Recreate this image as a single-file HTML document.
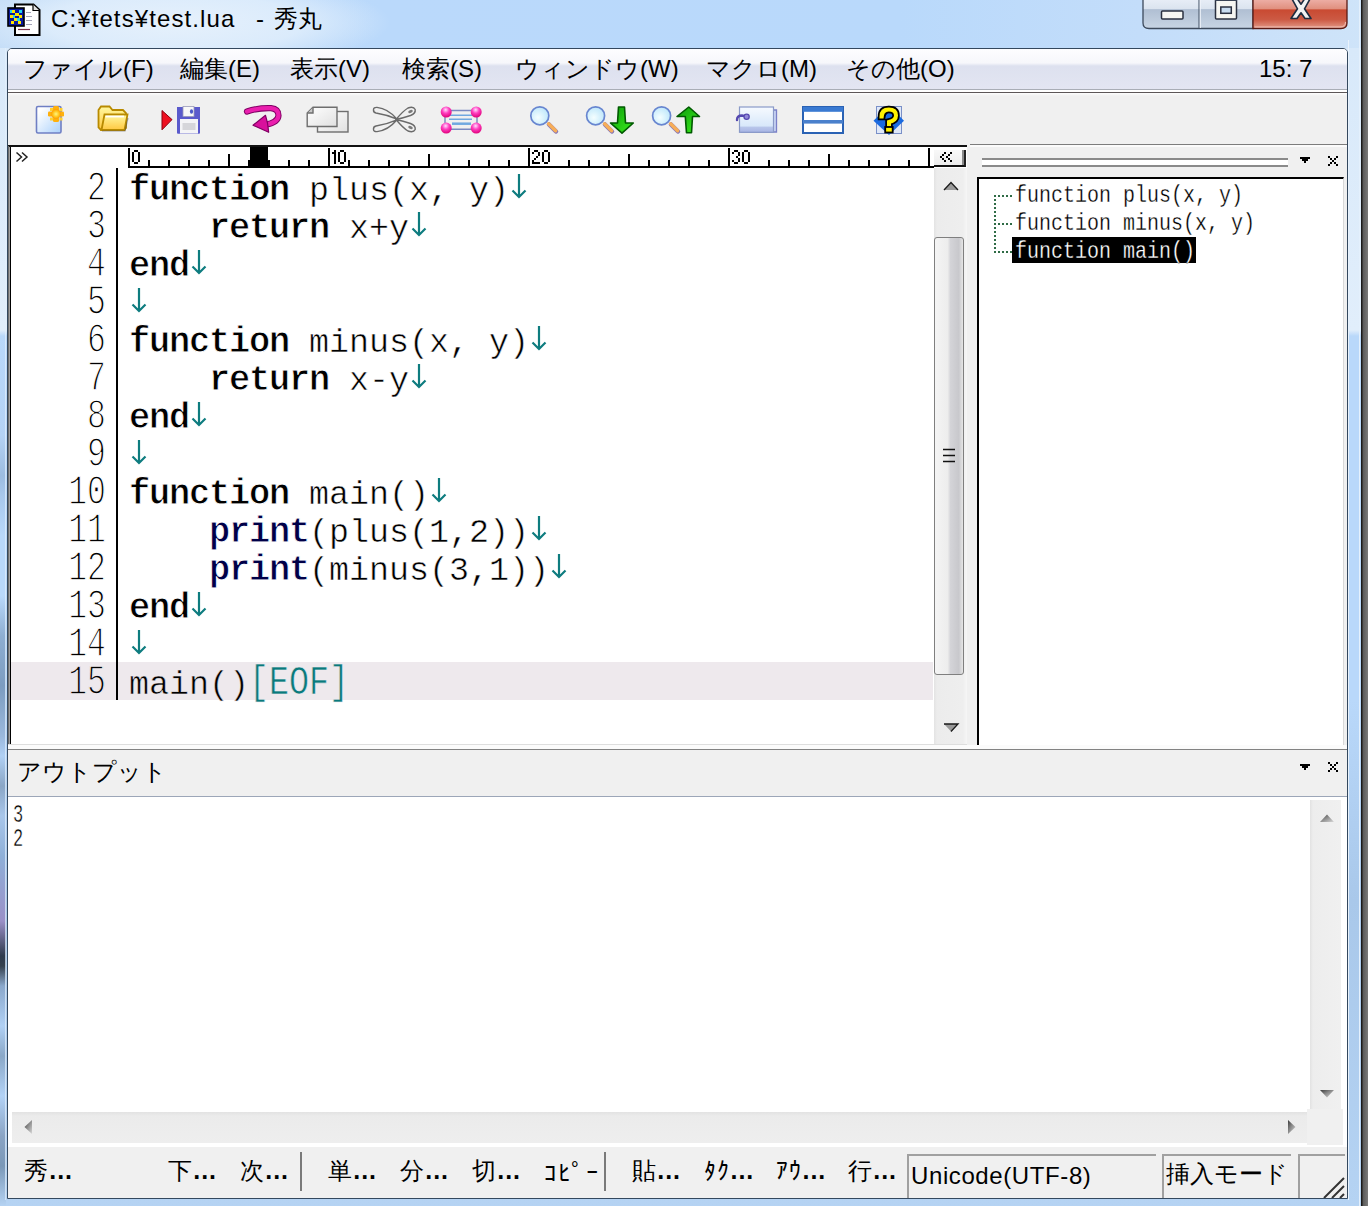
<!DOCTYPE html>
<html><head><meta charset="utf-8">
<style>
*{margin:0;padding:0;box-sizing:border-box}
html,body{width:1368px;height:1206px;overflow:hidden}
body{position:relative;font-family:"Liberation Sans",sans-serif;background:#bcd9f7}
.a{position:absolute}
.ui{font-family:"Liberation Sans",sans-serif;font-size:24px;color:#000;white-space:pre;line-height:1}
.ol{font-size:24px;line-height:28px;transform:scaleX(0.8333);-webkit-text-stroke:0.3px #fff;transform-origin:0 0}
.outp{font-size:25px;line-height:24px;color:#000;transform:scaleX(0.68);transform-origin:0 0;-webkit-text-stroke:0.4px #fff}
.sb{font-size:24px;letter-spacing:1.3px}
.code{font-size:34px;line-height:46px;height:38px;transform:scaleX(0.9804);transform-origin:0 0}
.ln{font-size:36px;line-height:46px;width:120px;text-align:right;transform:scale(0.875,1.17);transform-origin:100% 31px;-webkit-text-stroke:1.2px #fff;color:#000}
.rg{-webkit-text-stroke:0.5px #fff}
.cr{-webkit-text-stroke:0.5px #fff}
.kw{font-weight:bold;font-size:36px;letter-spacing:-1.2px;-webkit-text-stroke:0.8px #fff}
.pr{font-weight:bold;color:#000048;font-size:36px;letter-spacing:-1.2px;-webkit-text-stroke:0.8px #fff}
.cr{color:#0a7a7c}
.rl{font-size:23px;line-height:23px;transform:scale(0.84,1.0);transform-origin:0 0;color:#000}
.mono{font-family:"Liberation Mono",monospace;white-space:pre}
</style></head><body>
<!-- frame background -->
<div class="a" style="left:0;top:0;width:1368px;height:1206px;background:linear-gradient(180deg,#d3e6f9 0px,#d8e9fa 48px,#e1eefb 330px,#b9d8fa 336px,#b9d8fa 700px,#a9c8ea 900px,#b5d3f3 1206px)"></div>
<div class="a" style="left:0;top:0;width:1368px;height:48px;background:linear-gradient(90deg,#c4ddf7 0,#bad9fb 380px,#b9d9fb 900px,#c3ddfa 1140px,#cfe4f9 1368px)"></div>
<div class="a" style="left:-40px;top:-25px;width:430px;height:95px;background:radial-gradient(closest-side,rgba(232,242,252,0.95) 0,rgba(224,238,252,0.85) 60%,rgba(200,224,250,0) 100%)"></div>
<div class="a" style="left:0;top:336px;width:6px;height:870px;background:linear-gradient(180deg,#b9d8fa 0,#b4d2f4 100px,#9cbce0 140px,#a8c8ec 160px,#b9d8fa 200px,#b9d8fa 260px,#8eaed2 300px,#7c9cc0 350px,#9ab8dc 400px,#b0d0f4 420px,#8aa6c6 450px,#a8c6ea 480px,#8fb0d8 520px,#9a90c8 585px,#2e3a4c 620px,#34404e 630px,#8aa8cc 650px,#b0d0f4 690px,#8aa8c8 720px,#b2d2f6 760px,#8aa4c4 800px,#7a98b8 830px,#b5d3f3 870px)"></div><div class="a" style="left:5px;top:48px;width:1px;height:1152px;background:#e4effb;opacity:0.7"></div><div class="a" style="left:1348px;top:40px;width:1px;height:1160px;background:#e8f2fc"></div><div class="a" style="left:1359px;top:0;width:1px;height:1206px;background:#e4f0fc"></div><div class="a" style="left:1361px;top:0;width:7px;height:1206px;background:linear-gradient(90deg,#1a1a1a 0,#1a1a1a 1px,#5a5a5a 2px,#7a7a7a 7px)"></div>

<!-- title bar -->
<div id="title" class="a ui" style="left:51px;top:7px;font-size:24px;letter-spacing:1.1px">C:¥tets¥test.lua</div><div class="a ui" style="left:256px;top:7px;font-size:24px">-</div><div class="a ui" style="left:274px;top:7px;font-size:24px">秀丸</div>

<!-- caption buttons -->
<svg class="a" style="left:1140px;top:0" width="212" height="34" viewBox="1140 0 212 34">
<defs>
<linearGradient id="gCap" x1="0" y1="0" x2="0" y2="1"><stop offset="0" stop-color="#e8eef7"/><stop offset="0.33" stop-color="#dbe4ef"/><stop offset="0.36" stop-color="#b0bfd3"/><stop offset="1" stop-color="#c8d5e4"/></linearGradient>
<linearGradient id="gClose" x1="0" y1="0" x2="0" y2="1"><stop offset="0" stop-color="#eeb0a8"/><stop offset="0.33" stop-color="#e0907f"/><stop offset="0.37" stop-color="#c94a32"/><stop offset="0.7" stop-color="#cc5a44"/><stop offset="1" stop-color="#e39a88"/></linearGradient>
</defs>
<path d="M1143 -1 V23 Q1143 28.5 1149 28.5 H1253 V-1 Z" fill="url(#gCap)" stroke="#3d4a5c" stroke-width="1.3"/>
<path d="M1253 -1 V28.5 H1341 Q1347 28.5 1347 23 V-1 Z" fill="url(#gClose)" stroke="#5a1a14" stroke-width="1.3"/>
<path d="M1254.5 27 H1340 Q1345.5 27 1345.5 22" fill="none" stroke="#f8d0c8" stroke-width="1" opacity="0.8"/>
<line x1="1199" y1="0" x2="1199" y2="28" stroke="#566477" stroke-width="1.2"/>
<line x1="1200.3" y1="0" x2="1200.3" y2="28" stroke="#f0f4fa" stroke-width="1"/>
<rect x="1161.5" y="11" width="21.5" height="8" rx="1" fill="#f6f6f2" stroke="#2a3040" stroke-width="1.5"/>
<rect x="1215.5" y="-2" width="21" height="21" rx="1" fill="#f6f6f2" stroke="#2a3040" stroke-width="1.5"/>
<rect x="1215" y="-2" width="22" height="3" fill="#3a4456"/>
<rect x="1220.8" y="7" width="10.5" height="6.3" fill="#c8dcf0" stroke="#2a3040" stroke-width="1.5"/>
<path d="M1292 -1 L1297.5 -1 L1301 4.2 L1304.5 -1 L1310 -1 L1304.5 8.8 L1311 18.5 L1305 18.5 L1301 12.8 L1297 18.5 L1291 18.5 L1297.5 8.8 Z" fill="#f2f2f2" stroke="#1e2c40" stroke-width="1.6" stroke-linejoin="round"/>
</svg>
<!-- title icon -->
<svg class="a" style="left:0;top:0" width="48" height="40" viewBox="0 0 48 40">
<path d="M15 4.5 H33.5 L39.5 10 V35 H15 Z" fill="#fff" stroke="#000" stroke-width="2"/>
<path d="M33 4.5 V10.5 H39.5" fill="#e0e0e0" stroke="#000" stroke-width="1.2"/>
<path d="M26 12.5 H31 M26 16.5 H32 M26 20.5 H32 M26 24.5 H32" stroke="#9a9ab0" stroke-width="0.9"/>
<path d="M18 29.5 H30" stroke="#7a3048" stroke-width="1.2"/>
<rect x="8" y="8" width="16" height="18" fill="#0a1aa0" stroke="#000" stroke-width="1.6"/>
<g fill="#ffe600"><rect x="12" y="10" width="3" height="3"/><rect x="15" y="13" width="4" height="3"/><rect x="10" y="15" width="3" height="3"/><rect x="19" y="15" width="3" height="3"/><rect x="14" y="18" width="3" height="3"/><rect x="11" y="21" width="3" height="3"/><rect x="18" y="21" width="3" height="3"/></g>
<g fill="#20d8f0"><rect x="10" y="10" width="2" height="3"/><rect x="19" y="10" width="3" height="3"/><rect x="13" y="15" width="2" height="3"/><rect x="17" y="18" width="3" height="3"/></g>
</svg>
<!-- client area -->
<div class="a" style="left:7px;top:48px;width:1341px;height:1151px;border:1px solid #34485e;border-radius:5px 5px 0 0;background:#f0f0f0;overflow:hidden">
</div>

<!-- menu bar -->
<div class="a" style="left:8px;top:49px;width:1339px;height:40px;background:linear-gradient(180deg,#fdfdff 0,#f6f7fb 14px,#dde1ef 17px,#e3e5f2 40px);border-radius:4px 4px 0 0"></div>
<div class="a" style="left:8px;top:89px;width:1339px;height:1px;background:#a9adb6"></div>
<div class="a" style="left:8px;top:90px;width:1339px;height:2px;background:#ffffff"></div>
<div class="a" style="left:8px;top:92px;width:1339px;height:1px;background:#5c5657"></div><div class="a" style="left:8px;top:93px;width:1339px;height:3px;background:linear-gradient(180deg,#fdfdfd,#f0f0f0)"></div>

<div class="a ui" style="left:23px;top:57px">ファイル(F)</div>
<div class="a ui" style="left:180px;top:57px">編集(E)</div>
<div class="a ui" style="left:290px;top:57px">表示(V)</div>
<div class="a ui" style="left:402px;top:57px">検索(S)</div>
<div class="a ui" style="left:515px;top:57px">ウィンドウ(W)</div>
<div class="a ui" style="left:706px;top:57px">マクロ(M)</div>
<div class="a ui" style="left:846px;top:57px">その他(O)</div>
<div class="a ui" style="left:1259px;top:57px">15: 7</div>

<div class="a" style="left:8px;top:144px;width:1339px;height:2px;background:#f0f0f0"></div>
<svg class="a" style="left:0;top:95px" width="950" height="50" viewBox="0 95 950 50">
<defs>
<linearGradient id="gNew" x1="0" y1="0" x2="1" y2="1"><stop offset="0.15" stop-color="#ffffff"/><stop offset="1" stop-color="#a9d0fb"/></linearGradient>
<radialGradient id="gStar"><stop offset="0" stop-color="#fff480"/><stop offset="0.6" stop-color="#ffc820"/><stop offset="1" stop-color="#ff9c00"/></radialGradient>
<linearGradient id="gFold" x1="0" y1="0" x2="0" y2="1"><stop offset="0" stop-color="#fff8a0"/><stop offset="1" stop-color="#ffc840"/></linearGradient>
<linearGradient id="gCopy" x1="0" y1="0" x2="1" y2="1"><stop offset="0" stop-color="#ffffff"/><stop offset="1" stop-color="#e0e0e0"/></linearGradient>
<radialGradient id="gBall" cx="0.45" cy="0.3" r="0.7"><stop offset="0" stop-color="#ffe0ff"/><stop offset="0.45" stop-color="#ff40c0"/><stop offset="1" stop-color="#e0007a"/></radialGradient>
<radialGradient id="gLens" cx="0.4" cy="0.6" r="0.7"><stop offset="0" stop-color="#f4feff"/><stop offset="1" stop-color="#b8e4fa"/></radialGradient>
<linearGradient id="gGreen" x1="0" y1="0" x2="1" y2="1"><stop offset="0" stop-color="#0c9a0c"/><stop offset="1" stop-color="#3cf01c"/></linearGradient>
<linearGradient id="gTag" x1="0" y1="0" x2="0" y2="1"><stop offset="0" stop-color="#f6faff"/><stop offset="0.75" stop-color="#d8e8fa"/><stop offset="0.8" stop-color="#b8c6ea"/><stop offset="1" stop-color="#a8b4e4"/></linearGradient>
</defs>
<!-- new -->
<rect x="36.5" y="106.5" width="24.5" height="26.5" rx="1.5" fill="url(#gNew)" stroke="#6f7fc4" stroke-width="1.6"/>
<g fill="#ffb00c">
<rect x="53" y="106" width="6" height="5" rx="1.5"/><rect x="53" y="117" width="6" height="5" rx="1.5"/>
<rect x="48" y="111.5" width="5" height="5" rx="1.2"/><rect x="59" y="111.5" width="5" height="5" rx="1.2"/>
<rect x="50" y="108" width="3" height="3" fill="#ffd030"/><rect x="59.5" y="108" width="3" height="3" fill="#ffd030"/>
<rect x="50" y="117.5" width="3" height="3" fill="#ffd030"/><rect x="59.5" y="117.5" width="3" height="3" fill="#ffd030"/>
</g>
<circle cx="56" cy="114" r="4.8" fill="url(#gStar)"/>
<!-- open folder -->
<path d="M98.5 110 L101 106.5 H109.5 L112.5 110 H123 L126 113 V128 L124 130 H101 L98.5 127.5 Z" fill="url(#gFold)" stroke="#b88a00" stroke-width="1.8"/>
<path d="M101.5 130 L104.5 114.5 H127.5 L124.5 130 Z" fill="url(#gFold)" stroke="#b88a00" stroke-width="1.8"/>
<path d="M105.5 116.5 H124" stroke="#ffffff" stroke-width="1.8"/>
<path d="M102 131 H125 L128 118" stroke="#444" stroke-width="1.2" fill="none" opacity="0.45"/>
<!-- red triangle -->
<path d="M162 110.5 L172 119.6 L162 129.8 Z" fill="#ee1020" stroke="#8a0010" stroke-width="1"/>
<!-- floppy -->
<path d="M177 107 H200 V132.8 Q200 133.8 199 133.8 H178 Q177 133.8 177 132.8 Z" fill="#5a5acc"/>
<rect x="183" y="106.5" width="11" height="10" fill="#f8f8f8" stroke="#9a9ab8" stroke-width="0.8"/>
<ellipse cx="191.5" cy="111.5" rx="1.6" ry="2.2" fill="#4a58c8"/>
<rect x="180" y="119" width="18" height="14.5" fill="#f4f4f6"/>
<rect x="182.5" y="123" width="13" height="7" fill="#d6d6da"/>
<!-- undo arrow -->
<path d="M247 111.5 Q258 107.8 271 108.2 Q278.5 109 278.5 115.5 Q278 122.5 266 124.5" fill="none" stroke="#800064" stroke-width="6.2" stroke-linecap="round"/>
<path d="M247 111.5 Q258 107.8 271 108.2 Q278.5 109 278.5 115.5 Q278 122.5 266 124.5" fill="none" stroke="#ea1fae" stroke-width="4.2" stroke-linecap="round"/>
<path d="M253 125.2 L265.5 115.3 L267.5 123 L268.7 132.3 Z" fill="#d8109c" stroke="#800064" stroke-width="1.2" stroke-linejoin="round"/>
<!-- copy -->
<rect x="317.5" y="111.5" width="30.5" height="20.5" fill="url(#gCopy)" stroke="#6e6e6e" stroke-width="1.4"/>
<path d="M313 107.2 H337 V126.5 H307.2 V113 Z" fill="url(#gCopy)" stroke="#6e6e6e" stroke-width="1.4"/>
<path d="M307.5 113 H313 V107.5" fill="#c8c8c8" stroke="#6e6e6e" stroke-width="1.4"/>
<!-- scissors -->
<g fill="#f0f0f0" stroke="#6a6a6a" stroke-width="1.4" stroke-linejoin="round">
<path d="M373.5 109.5 Q373.5 107.2 377 107.4 Q388 108.5 397 119.2 Q386 114.5 376 113 Q373.2 112.5 373.5 109.5 Z"/>
<path d="M373.5 129.5 Q373.5 131.8 377 131.6 Q388 130.5 397 119.8 Q386 124.5 376 126 Q373.2 126.5 373.5 129.5 Z"/>
<path d="M396 119.5 Q403 111 408 108 Q413.5 106 415.2 109.5 Q415.8 113.5 410.5 115.5 Q403 118 396 119.5 Z"/>
<path d="M396 119.5 Q403 128 408 131 Q413.5 133 415.2 129.5 Q415.8 125.5 410.5 123.5 Q403 121 396 119.5 Z"/>
</g>
<ellipse cx="410.5" cy="111.5" rx="2.4" ry="1.5" fill="#7a7a7a" transform="rotate(-25 410.5 111.5)"/>
<ellipse cx="410.5" cy="127.5" rx="2.4" ry="1.5" fill="#7a7a7a" transform="rotate(25 410.5 127.5)"/>
<!-- select -->
<g stroke-width="1.5" fill="none">
<path d="M446 110.5 H476 M448 129.2 H475" stroke="#7a88c0"/>
<path d="M450 115.2 H472 M449 119.2 H472" stroke="#70a8e0"/>
<path d="M452 123.7 H471" stroke="#70a8e0" stroke-width="2.5"/>
<path d="M445 112 V128 M477 112 V128" stroke="#8090c0"/>
</g>
<circle cx="446.2" cy="112" r="5.5" fill="url(#gBall)"/>
<circle cx="476.2" cy="112" r="5.5" fill="url(#gBall)"/>
<circle cx="446.2" cy="128.1" r="5.5" fill="url(#gBall)"/>
<circle cx="476.2" cy="128.1" r="5.5" fill="url(#gBall)"/>
<!-- magnifier 1 -->
<path d="M549 124.5 L556 131.5" stroke="#8878b8" stroke-width="4.5" stroke-linecap="round"/>
<path d="M548.6 123.8 L555.6 130.8" stroke="#f7ae58" stroke-width="3.4" stroke-linecap="round"/>
<circle cx="539.8" cy="115.8" r="9" fill="url(#gLens)" stroke="#6886d0" stroke-width="1.7"/>
<!-- magnifier 2 + down arrow -->
<path d="M605 124.5 L612 131.5" stroke="#8878b8" stroke-width="4.5" stroke-linecap="round"/>
<path d="M604.6 123.8 L611.6 130.8" stroke="#f7ae58" stroke-width="3.4" stroke-linecap="round"/>
<circle cx="595.6" cy="115.8" r="9" fill="url(#gLens)" stroke="#6886d0" stroke-width="1.7"/>
<path d="M618.5 107 H624.5 L625.5 123 H633.3 L622 133.2 L610.5 123 H617.5 Z" fill="url(#gGreen)" stroke="#005a00" stroke-width="1.6" stroke-linejoin="round"/>
<!-- magnifier 3 + up arrow -->
<path d="M671 124.5 L678 131.5" stroke="#8878b8" stroke-width="4.5" stroke-linecap="round"/>
<path d="M670.6 123.8 L677.6 130.8" stroke="#f7ae58" stroke-width="3.4" stroke-linecap="round"/>
<circle cx="661.6" cy="115.8" r="9" fill="url(#gLens)" stroke="#6886d0" stroke-width="1.7"/>
<path d="M688.8 107 L699.5 116.5 H692.5 L691.5 132.8 H686.5 L685.3 116.5 H677 Z" fill="url(#gGreen)" stroke="#005a00" stroke-width="1.6" stroke-linejoin="round"/>
<!-- tag -->
<path d="M773 110 H776.5 V132 H742 Z" fill="#c8d4f2" stroke="#7a80c8" stroke-width="1.3"/>
<rect x="739.5" y="107" width="34" height="25.3" fill="url(#gTag)" stroke="#8a9ac8" stroke-width="1.2"/>
<path d="M737 120 Q737 115.5 742 115.5 Q746 116 746.5 118" fill="none" stroke="#5548b0" stroke-width="2.4" stroke-linecap="round"/>
<circle cx="746.6" cy="116.8" r="2.6" fill="#9088d8" stroke="#5548b0" stroke-width="1.3"/>
<!-- window split -->
<rect x="803" y="107" width="40" height="26" fill="#ffffff" stroke="#2a62b4" stroke-width="2"/>
<rect x="803" y="107" width="40" height="4.8" fill="#3a7ad2"/>
<rect x="803" y="120" width="40" height="3.6" fill="#4a80cc"/>
<!-- help -->
<rect x="876.5" y="106.5" width="25" height="27" fill="#dfe8f8" stroke="#7a90c8" stroke-width="1"/>
<path d="M889 105.5 L904 120.8 L889 135 L873.5 120.8 Z" fill="#1a6ae0"/>
<path d="M881.5 116.5 Q881.5 109.5 888.8 109.5 Q896 109.5 896 115.5 Q896 120.5 889 122 V124.5" fill="none" stroke="#000" stroke-width="7.5" stroke-linecap="square"/>
<path d="M881.5 116.5 Q881.5 109.5 888.8 109.5 Q896 109.5 896 115.5 Q896 120.5 889 122 V124.5" fill="none" stroke="#fff200" stroke-width="4" stroke-linecap="square"/>
<rect x="885.2" y="127" width="7.5" height="5.5" fill="#fff200" stroke="#000" stroke-width="1.8"/>
</svg>


<!-- editor -->
<div class="a" style="left:8px;top:145px;width:959px;height:2px;background:#111"></div>
<div class="a" style="left:8px;top:146px;width:1px;height:599px;background:#6d6d6d"></div>
<div class="a" style="left:9px;top:147px;width:1px;height:598px;background:#a0a0a0"></div>
<div class="a" style="left:10px;top:147px;width:1px;height:598px;background:#000"></div>
<div class="a" style="left:11px;top:147px;width:923px;height:597px;background:#fff"></div>
<!-- line 15 highlight -->
<div class="a" style="left:11px;top:662px;width:922px;height:38px;background:#eee9ed"></div>
<!-- ruler -->
<svg class="a" style="left:14px;top:150px" width="16" height="14"><path d="M2.5 2.5 L7.5 7 L2.5 11.5 M8 2.5 L13 7 L8 11.5" stroke="#222" stroke-width="1.5" fill="none"/></svg>
<svg class="a" style="left:0;top:0" width="950" height="170" viewBox="0 0 950 170"><rect x="128" y="166" width="806" height="2" fill="#000"/><rect x="128" y="148" width="2" height="18" fill="#000"/><rect x="148" y="160" width="2" height="6" fill="#000"/><rect x="168" y="160" width="2" height="6" fill="#000"/><rect x="188" y="160" width="2" height="6" fill="#000"/><rect x="208" y="160" width="2" height="6" fill="#000"/><rect x="228" y="154" width="2" height="12" fill="#000"/><rect x="248" y="160" width="2" height="6" fill="#000"/><rect x="268" y="160" width="2" height="6" fill="#000"/><rect x="288" y="160" width="2" height="6" fill="#000"/><rect x="308" y="160" width="2" height="6" fill="#000"/><rect x="328" y="148" width="2" height="18" fill="#000"/><rect x="348" y="160" width="2" height="6" fill="#000"/><rect x="368" y="160" width="2" height="6" fill="#000"/><rect x="388" y="160" width="2" height="6" fill="#000"/><rect x="408" y="160" width="2" height="6" fill="#000"/><rect x="428" y="154" width="2" height="12" fill="#000"/><rect x="448" y="160" width="2" height="6" fill="#000"/><rect x="468" y="160" width="2" height="6" fill="#000"/><rect x="488" y="160" width="2" height="6" fill="#000"/><rect x="508" y="160" width="2" height="6" fill="#000"/><rect x="528" y="148" width="2" height="18" fill="#000"/><rect x="568" y="160" width="2" height="6" fill="#000"/><rect x="588" y="160" width="2" height="6" fill="#000"/><rect x="608" y="160" width="2" height="6" fill="#000"/><rect x="628" y="154" width="2" height="12" fill="#000"/><rect x="648" y="160" width="2" height="6" fill="#000"/><rect x="668" y="160" width="2" height="6" fill="#000"/><rect x="688" y="160" width="2" height="6" fill="#000"/><rect x="708" y="160" width="2" height="6" fill="#000"/><rect x="728" y="148" width="2" height="18" fill="#000"/><rect x="768" y="160" width="2" height="6" fill="#000"/><rect x="788" y="160" width="2" height="6" fill="#000"/><rect x="808" y="160" width="2" height="6" fill="#000"/><rect x="828" y="154" width="2" height="12" fill="#000"/><rect x="848" y="160" width="2" height="6" fill="#000"/><rect x="868" y="160" width="2" height="6" fill="#000"/><rect x="888" y="160" width="2" height="6" fill="#000"/><rect x="908" y="160" width="2" height="6" fill="#000"/><rect x="928" y="148" width="2" height="18" fill="#000"/><rect x="250" y="147" width="18" height="19" fill="#000"/><rect x="248" y="160" width="22" height="6" fill="#000"/></svg>
<!-- code -->
<div class="a mono ln" style="left:-14px;top:168px">2</div>
<div class="a mono code" style="left:129px;top:168px"><b class="kw">function</b><span class="rg"> plus(x, y)</span></div>
<svg class="a" style="left:509px;top:168px" width="20" height="38"><path d="M10 6V29.5M3.5 22.5L10 29L16.5 22.5" stroke="#0e7c7f" stroke-width="2.2" fill="none"/></svg>
<div class="a mono ln" style="left:-14px;top:206px">3</div>
<div class="a mono code" style="left:129px;top:206px"><span class="rg">    </span><b class="kw">return</b><span class="rg"> x+y</span></div>
<svg class="a" style="left:409px;top:206px" width="20" height="38"><path d="M10 6V29.5M3.5 22.5L10 29L16.5 22.5" stroke="#0e7c7f" stroke-width="2.2" fill="none"/></svg>
<div class="a mono ln" style="left:-14px;top:244px">4</div>
<div class="a mono code" style="left:129px;top:244px"><b class="kw">end</b></div>
<svg class="a" style="left:189px;top:244px" width="20" height="38"><path d="M10 6V29.5M3.5 22.5L10 29L16.5 22.5" stroke="#0e7c7f" stroke-width="2.2" fill="none"/></svg>
<div class="a mono ln" style="left:-14px;top:282px">5</div>
<div class="a mono code" style="left:129px;top:282px"></div>
<svg class="a" style="left:129px;top:282px" width="20" height="38"><path d="M10 6V29.5M3.5 22.5L10 29L16.5 22.5" stroke="#0e7c7f" stroke-width="2.2" fill="none"/></svg>
<div class="a mono ln" style="left:-14px;top:320px">6</div>
<div class="a mono code" style="left:129px;top:320px"><b class="kw">function</b><span class="rg"> minus(x, y)</span></div>
<svg class="a" style="left:529px;top:320px" width="20" height="38"><path d="M10 6V29.5M3.5 22.5L10 29L16.5 22.5" stroke="#0e7c7f" stroke-width="2.2" fill="none"/></svg>
<div class="a mono ln" style="left:-14px;top:358px">7</div>
<div class="a mono code" style="left:129px;top:358px"><span class="rg">    </span><b class="kw">return</b><span class="rg"> x-y</span></div>
<svg class="a" style="left:409px;top:358px" width="20" height="38"><path d="M10 6V29.5M3.5 22.5L10 29L16.5 22.5" stroke="#0e7c7f" stroke-width="2.2" fill="none"/></svg>
<div class="a mono ln" style="left:-14px;top:396px">8</div>
<div class="a mono code" style="left:129px;top:396px"><b class="kw">end</b></div>
<svg class="a" style="left:189px;top:396px" width="20" height="38"><path d="M10 6V29.5M3.5 22.5L10 29L16.5 22.5" stroke="#0e7c7f" stroke-width="2.2" fill="none"/></svg>
<div class="a mono ln" style="left:-14px;top:434px">9</div>
<div class="a mono code" style="left:129px;top:434px"></div>
<svg class="a" style="left:129px;top:434px" width="20" height="38"><path d="M10 6V29.5M3.5 22.5L10 29L16.5 22.5" stroke="#0e7c7f" stroke-width="2.2" fill="none"/></svg>
<div class="a mono ln" style="left:-14px;top:472px">10</div>
<div class="a mono code" style="left:129px;top:472px"><b class="kw">function</b><span class="rg"> main()</span></div>
<svg class="a" style="left:429px;top:472px" width="20" height="38"><path d="M10 6V29.5M3.5 22.5L10 29L16.5 22.5" stroke="#0e7c7f" stroke-width="2.2" fill="none"/></svg>
<div class="a mono ln" style="left:-14px;top:510px">11</div>
<div class="a mono code" style="left:129px;top:510px"><span class="rg">    </span><b class="pr">print</b><span class="rg">(plus(1,2))</span></div>
<svg class="a" style="left:529px;top:510px" width="20" height="38"><path d="M10 6V29.5M3.5 22.5L10 29L16.5 22.5" stroke="#0e7c7f" stroke-width="2.2" fill="none"/></svg>
<div class="a mono ln" style="left:-14px;top:548px">12</div>
<div class="a mono code" style="left:129px;top:548px"><span class="rg">    </span><b class="pr">print</b><span class="rg">(minus(3,1))</span></div>
<svg class="a" style="left:549px;top:548px" width="20" height="38"><path d="M10 6V29.5M3.5 22.5L10 29L16.5 22.5" stroke="#0e7c7f" stroke-width="2.2" fill="none"/></svg>
<div class="a mono ln" style="left:-14px;top:586px">13</div>
<div class="a mono code" style="left:129px;top:586px"><b class="kw">end</b></div>
<svg class="a" style="left:189px;top:586px" width="20" height="38"><path d="M10 6V29.5M3.5 22.5L10 29L16.5 22.5" stroke="#0e7c7f" stroke-width="2.2" fill="none"/></svg>
<div class="a mono ln" style="left:-14px;top:624px">14</div>
<div class="a mono code" style="left:129px;top:624px"></div>
<svg class="a" style="left:129px;top:624px" width="20" height="38"><path d="M10 6V29.5M3.5 22.5L10 29L16.5 22.5" stroke="#0e7c7f" stroke-width="2.2" fill="none"/></svg>
<div class="a mono ln" style="left:-14px;top:662px;-webkit-text-stroke-color:#eee9ed">15</div>
<div class="a mono code" style="left:129px;top:662px"><span class="rg" style="-webkit-text-stroke-color:#eee9ed">main()</span><span class="cr" style="-webkit-text-stroke-color:#eee9ed;display:inline-block;height:46px;transform:scaleY(1.17);transform-origin:0 31px">[EOF]</span></div>
<svg class="a" style="left:0;top:0" width="950" height="170" viewBox="0 0 950 170" fill="#000"><rect x="134" y="150" width="2" height="2"/><rect x="136" y="150" width="2" height="2"/><rect x="132" y="152" width="2" height="2"/><rect x="138" y="152" width="2" height="2"/><rect x="132" y="154" width="2" height="2"/><rect x="138" y="154" width="2" height="2"/><rect x="132" y="156" width="2" height="2"/><rect x="138" y="156" width="2" height="2"/><rect x="132" y="158" width="2" height="2"/><rect x="138" y="158" width="2" height="2"/><rect x="132" y="160" width="2" height="2"/><rect x="138" y="160" width="2" height="2"/><rect x="134" y="162" width="2" height="2"/><rect x="136" y="162" width="2" height="2"/><rect x="334" y="150" width="2" height="2"/><rect x="332" y="152" width="2" height="2"/><rect x="334" y="152" width="2" height="2"/><rect x="334" y="154" width="2" height="2"/><rect x="334" y="156" width="2" height="2"/><rect x="334" y="158" width="2" height="2"/><rect x="334" y="160" width="2" height="2"/><rect x="334" y="162" width="2" height="2"/><rect x="340" y="150" width="2" height="2"/><rect x="342" y="150" width="2" height="2"/><rect x="338" y="152" width="2" height="2"/><rect x="344" y="152" width="2" height="2"/><rect x="338" y="154" width="2" height="2"/><rect x="344" y="154" width="2" height="2"/><rect x="338" y="156" width="2" height="2"/><rect x="344" y="156" width="2" height="2"/><rect x="338" y="158" width="2" height="2"/><rect x="344" y="158" width="2" height="2"/><rect x="338" y="160" width="2" height="2"/><rect x="344" y="160" width="2" height="2"/><rect x="340" y="162" width="2" height="2"/><rect x="342" y="162" width="2" height="2"/><rect x="534" y="150" width="2" height="2"/><rect x="536" y="150" width="2" height="2"/><rect x="532" y="152" width="2" height="2"/><rect x="538" y="152" width="2" height="2"/><rect x="538" y="154" width="2" height="2"/><rect x="536" y="156" width="2" height="2"/><rect x="534" y="158" width="2" height="2"/><rect x="532" y="160" width="2" height="2"/><rect x="532" y="162" width="2" height="2"/><rect x="534" y="162" width="2" height="2"/><rect x="536" y="162" width="2" height="2"/><rect x="538" y="162" width="2" height="2"/><rect x="544" y="150" width="2" height="2"/><rect x="546" y="150" width="2" height="2"/><rect x="542" y="152" width="2" height="2"/><rect x="548" y="152" width="2" height="2"/><rect x="542" y="154" width="2" height="2"/><rect x="548" y="154" width="2" height="2"/><rect x="542" y="156" width="2" height="2"/><rect x="548" y="156" width="2" height="2"/><rect x="542" y="158" width="2" height="2"/><rect x="548" y="158" width="2" height="2"/><rect x="542" y="160" width="2" height="2"/><rect x="548" y="160" width="2" height="2"/><rect x="544" y="162" width="2" height="2"/><rect x="546" y="162" width="2" height="2"/><rect x="734" y="150" width="2" height="2"/><rect x="736" y="150" width="2" height="2"/><rect x="732" y="152" width="2" height="2"/><rect x="738" y="152" width="2" height="2"/><rect x="738" y="154" width="2" height="2"/><rect x="736" y="156" width="2" height="2"/><rect x="738" y="158" width="2" height="2"/><rect x="732" y="160" width="2" height="2"/><rect x="738" y="160" width="2" height="2"/><rect x="734" y="162" width="2" height="2"/><rect x="736" y="162" width="2" height="2"/><rect x="744" y="150" width="2" height="2"/><rect x="746" y="150" width="2" height="2"/><rect x="742" y="152" width="2" height="2"/><rect x="748" y="152" width="2" height="2"/><rect x="742" y="154" width="2" height="2"/><rect x="748" y="154" width="2" height="2"/><rect x="742" y="156" width="2" height="2"/><rect x="748" y="156" width="2" height="2"/><rect x="742" y="158" width="2" height="2"/><rect x="748" y="158" width="2" height="2"/><rect x="742" y="160" width="2" height="2"/><rect x="748" y="160" width="2" height="2"/><rect x="744" y="162" width="2" height="2"/><rect x="746" y="162" width="2" height="2"/></svg>
<!-- gutter line -->
<div class="a" style="left:116px;top:168px;width:2px;height:532px;background:#000"></div>
<!-- vscroll -->
<div class="a" style="left:934px;top:147px;width:33px;height:598px;background:#e9e9e9"></div>
<div class="a" style="left:934px;top:147px;width:33px;height:21px;background:#fff"></div><div class="a" style="left:934px;top:150px;width:32px;height:17px;background:linear-gradient(180deg,#f8f8f8,#ececec);border-right:2px solid #222;border-bottom:2px solid #111;box-shadow:inset -2px 0 0 #8a8a8a"></div>
<svg class="a" style="left:939px;top:152px" width="14" height="10" fill="#000"><rect x="5" y="0" width="2" height="2"/><rect x="3" y="2" width="2" height="2"/><rect x="1" y="4" width="2" height="2"/><rect x="3" y="6" width="2" height="2"/><rect x="5" y="8" width="2" height="2"/><rect x="11" y="0" width="2" height="2"/><rect x="9" y="2" width="2" height="2"/><rect x="7" y="4" width="2" height="2"/><rect x="9" y="6" width="2" height="2"/><rect x="11" y="8" width="2" height="2"/></svg>
<div class="a" style="left:934px;top:168px;width:33px;height:577px;background:linear-gradient(90deg,#e3e3e3 0,#ececec 3px,#eeeeee 29px,#f6f6f6 33px)"></div>
<svg class="a" style="left:942px;top:180px" width="18" height="12"><defs><linearGradient id="gAr2" x1="0" y1="0" x2="1" y2="1"><stop offset="0" stop-color="#202020"/><stop offset="1" stop-color="#a8a8a8"/></linearGradient></defs><path d="M2 10 L9 2.5 L16 10 Z" fill="#9a9a9a"/><path d="M2 10 L9 2.5 L16 10" fill="none" stroke="#1a1a1a" stroke-width="1.3"/></svg>
<div class="a" style="left:934px;top:237px;width:30px;height:438px;border:1px solid #7f7f7f;border-radius:3px;background:linear-gradient(90deg,#f4f4f4 0,#ededed 45%,#d4d4d8 55%,#c8c8cc 85%,#e6e6e6 100%)"></div>
<svg class="a" style="left:940px;top:446px" width="18" height="18"><path d="M3 3.5 H15 M3 9.5 H15 M3 15.5 H15" stroke="#111" stroke-width="1.6"/></svg>
<svg class="a" style="left:942px;top:722px" width="18" height="12"><path d="M2 2 L16 2 L9 9.5 Z" fill="#9a9a9a"/><path d="M2 2 L16 2 L9 9.5" fill="none" stroke="#1a1a1a" stroke-width="1.3"/></svg>
<!-- editor bottom -->
<div class="a" style="left:8px;top:744px;width:1339px;height:1px;background:#dedede"></div>
<div class="a" style="left:8px;top:745px;width:1339px;height:4px;background:#fbfbfb"></div>
<div class="a" style="left:8px;top:749px;width:1339px;height:1px;background:#828282"></div>

<!-- outline pane -->
<div class="a" style="left:967px;top:144px;width:380px;height:601px;background:#f0f0f0"></div>
<div class="a" style="left:970px;top:144px;width:377px;height:1px;background:#7c7c7c"></div><div class="a" style="left:970px;top:145px;width:377px;height:2px;background:#fbfbfb"></div>
<div class="a" style="left:982px;top:158px;width:306px;height:2px;background:#8a8a8a"></div>
<div class="a" style="left:982px;top:160px;width:306px;height:5px;background:#fff"></div>
<div class="a" style="left:982px;top:165px;width:306px;height:2px;background:#8a8a8a"></div>
<svg class="a" style="left:1300px;top:157px" width="12" height="8" fill="#000"><rect x="0" y="0" width="10" height="2"/><rect x="2" y="2" width="6" height="2"/><rect x="4" y="4" width="2" height="2"/></svg>
<svg class="a" style="left:1328px;top:156px" width="10" height="10" fill="#000"><rect x="0" y="0" width="2" height="2"/><rect x="8" y="0" width="2" height="2"/><rect x="2" y="2" width="2" height="2"/><rect x="6" y="2" width="2" height="2"/><rect x="4" y="4" width="2" height="2"/><rect x="6" y="6" width="2" height="2"/><rect x="2" y="6" width="2" height="2"/><rect x="8" y="8" width="2" height="2"/><rect x="0" y="8" width="2" height="2"/></svg>
<div class="a" style="left:977px;top:177px;width:367px;height:568px;background:#fff;border-top:2px solid #000;border-left:2px solid #000;border-right:1px solid #d8d8d8"></div>
<svg class="a" style="left:0;top:0" width="1020" height="260" fill="#2f6b46"><rect x="994" y="195" width="2" height="2"/><rect x="994" y="199" width="2" height="2"/><rect x="994" y="203" width="2" height="2"/><rect x="994" y="207" width="2" height="2"/><rect x="994" y="211" width="2" height="2"/><rect x="994" y="215" width="2" height="2"/><rect x="994" y="219" width="2" height="2"/><rect x="994" y="223" width="2" height="2"/><rect x="994" y="227" width="2" height="2"/><rect x="994" y="231" width="2" height="2"/><rect x="994" y="235" width="2" height="2"/><rect x="994" y="239" width="2" height="2"/><rect x="994" y="243" width="2" height="2"/><rect x="994" y="247" width="2" height="2"/><rect x="994" y="251" width="2" height="2"/><rect x="998" y="195" width="2" height="2"/><rect x="1002" y="195" width="2" height="2"/><rect x="1006" y="195" width="2" height="2"/><rect x="1010" y="195" width="2" height="2"/><rect x="998" y="223" width="2" height="2"/><rect x="1002" y="223" width="2" height="2"/><rect x="1006" y="223" width="2" height="2"/><rect x="1010" y="223" width="2" height="2"/><rect x="998" y="251" width="2" height="2"/><rect x="1002" y="251" width="2" height="2"/><rect x="1006" y="251" width="2" height="2"/><rect x="1010" y="251" width="2" height="2"/></svg>
<div class="a" style="left:1012px;top:237px;width:184px;height:26px;background:#000"></div>
<div class="a mono ol" style="left:1015px;top:182px;color:#000">function plus(x, y)</div>
<div class="a mono ol" style="left:1015px;top:210px;color:#000">function minus(x, y)</div>
<div class="a mono ol" style="left:1015px;top:238px;color:#fff;-webkit-text-stroke-color:#000">function main()</div>

<!-- output header -->
<div class="a ui" style="left:17px;top:760px">アウトプット</div>
<svg class="a" style="left:1300px;top:764px" width="12" height="8" fill="#000"><rect x="0" y="0" width="10" height="2"/><rect x="2" y="2" width="6" height="2"/><rect x="4" y="4" width="2" height="2"/></svg>
<svg class="a" style="left:1328px;top:762px" width="10" height="10" fill="#000"><rect x="0" y="0" width="2" height="2"/><rect x="8" y="0" width="2" height="2"/><rect x="2" y="2" width="2" height="2"/><rect x="6" y="2" width="2" height="2"/><rect x="4" y="4" width="2" height="2"/><rect x="6" y="6" width="2" height="2"/><rect x="2" y="6" width="2" height="2"/><rect x="8" y="8" width="2" height="2"/><rect x="0" y="8" width="2" height="2"/></svg>
<div class="a" style="left:8px;top:796px;width:1339px;height:1px;background:#9ca6b8"></div>
<div class="a" style="left:8px;top:797px;width:1339px;height:350px;background:#fff"></div>
<div class="a" style="left:1307px;top:1109px;width:36px;height:36px;background:#f0f0f0"></div>
<div class="a mono outp" style="left:13px;top:804px">3
2</div>
<!-- output vscroll -->
<div class="a" style="left:1310px;top:800px;width:31px;height:309px;background:linear-gradient(90deg,#e2e2e2 0,#ededed 3px,#f0f0f0 100%)"></div>
<svg class="a" style="left:1318px;top:812px" width="18" height="12"><defs><linearGradient id="gAr" x1="0" y1="0" x2="1" y2="1"><stop offset="0" stop-color="#3a3a3a"/><stop offset="0.45" stop-color="#8a8a8a"/><stop offset="1" stop-color="#d8d8d8"/></linearGradient></defs><path d="M2 10 L9 2.5 L16 10 Z" fill="url(#gAr)"/></svg>
<svg class="a" style="left:1318px;top:1088px" width="18" height="12"><path d="M2 2 L16 2 L9 9.5 Z" fill="url(#gAr)"/></svg>
<!-- hscroll -->
<div class="a" style="left:12px;top:1112px;width:1295px;height:31px;background:linear-gradient(180deg,#e2e2e2 0,#ebebeb 4px,#eeeeee 100%)"></div>
<svg class="a" style="left:22px;top:1118px" width="12" height="18"><path d="M10 2 L10 16 L2.5 9 Z" fill="url(#gAr)"/></svg>
<svg class="a" style="left:1286px;top:1118px" width="12" height="18"><path d="M2 2 L2 16 L9.5 9 Z" fill="url(#gAr)"/></svg>
<div class="a" style="left:8px;top:1145px;width:1339px;height:2px;background:#fff"></div>
<!-- status bar -->
<div class="a ui sb" style="left:24px;top:1158px">秀<b style="font-size:25px;letter-spacing:0.9px">...</b></div>
<div class="a ui sb" style="left:168px;top:1158px">下<b style="font-size:25px;letter-spacing:0.9px">...</b></div>
<div class="a ui sb" style="left:240px;top:1158px">次<b style="font-size:25px;letter-spacing:0.9px">...</b></div>
<div class="a" style="left:300px;top:1152px;width:2px;height:39px;background:#7a7a7a"></div>
<div class="a ui sb" style="left:328px;top:1158px">単<b style="font-size:25px;letter-spacing:0.9px">...</b></div>
<div class="a ui sb" style="left:400px;top:1158px">分<b style="font-size:25px;letter-spacing:0.9px">...</b></div>
<div class="a ui sb" style="left:472px;top:1158px">切<b style="font-size:25px;letter-spacing:0.9px">...</b></div>
<div class="a ui sb" style="left:544px;top:1161px;font-size:25px">ｺﾋﾟｰ</div>
<div class="a" style="left:604px;top:1152px;width:2px;height:39px;background:#7a7a7a"></div>
<div class="a ui sb" style="left:632px;top:1158px">貼<b style="font-size:25px;letter-spacing:0.9px">...</b></div>
<div class="a ui sb" style="left:704px;top:1158px">ﾀｸ<b style="font-size:25px;letter-spacing:0.9px">...</b></div>
<div class="a ui sb" style="left:776px;top:1158px">ｱｳ<b style="font-size:25px;letter-spacing:0.9px">...</b></div>
<div class="a ui sb" style="left:848px;top:1158px">行<b style="font-size:25px;letter-spacing:0.9px">...</b></div>
<div class="a" style="left:907px;top:1154px;width:249px;height:44px;border-top:2px solid #a0a0a0;border-left:2px solid #a0a0a0"></div>
<div class="a ui" style="left:911px;top:1164px;letter-spacing:0.6px">Unicode(UTF-8)</div>
<div class="a" style="left:1162px;top:1154px;width:129px;height:44px;border-top:2px solid #a0a0a0;border-left:2px solid #a0a0a0"></div>
<div class="a ui" style="left:1166px;top:1162px">挿入モード</div>
<div class="a" style="left:1298px;top:1154px;width:47px;height:44px;border-top:2px solid #a0a0a0;border-left:2px solid #a0a0a0"></div>
<svg class="a" style="left:1318px;top:1172px" width="28" height="26"><path d="M26 6 L6 26 M26 14 L14 26 M26 22 L22 26" stroke="#333" stroke-width="2"/></svg>

</body></html>
